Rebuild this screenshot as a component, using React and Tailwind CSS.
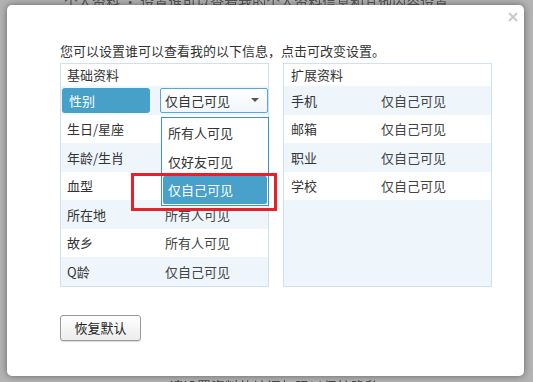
const basic = [
  { label: "生日/星座", value: "所有人可见" },
  { label: "年龄/生肖", value: "仅自己可见" },
  { label: "血型", value: "仅自己可见" },
  { label: "所在地", value: "所有人可见" },
  { label: "故乡", value: "所有人可见" },
  { label: "Q龄", value: "仅自己可见" },
];

const extra = [
  { label: "手机", value: "仅自己可见" },
  { label: "邮箱", value: "仅自己可见" },
  { label: "职业", value: "仅自己可见" },
  { label: "学校", value: "仅自己可见" },
];

const options = ["所有人可见", "仅好友可见", "仅自己可见"];

export default function App() {
  return (
    <div className="relative w-[533px] h-[382px] overflow-hidden bg-[#b3b3b3] pt-[5px] pl-[7px] font-['Noto_Sans_CJK_SC',sans-serif] text-[13px] text-[#333]">
      {/* page behind the overlay */}
      <div className="absolute left-[64px] top-[-9px] text-[14px] text-[#555] blur-[0.6px]">
        个人资料 · 设置谁可以查看我的个人资料信息和其他内容设置
      </div>
      <div className="absolute left-[145px] top-[376px] flex items-center gap-[14px] blur-[0.6px]">
        <div className="w-[10px] h-[10px] bg-[#5e9a3c]" />
        <div className="text-[14px] text-[#444]">请设置资料的访问权限以保护隐私</div>
      </div>

      <div className="relative w-[517px] h-[371px] bg-white rounded-[5px] shadow-[0_0_7px_rgba(0,0,0,0.45)] pt-[38px] pl-[53px]">
        <svg className="absolute left-[501px] top-[7px]" width="10" height="10" viewBox="0 0 10 10">
          <path d="M1 1L9 9M9 1L1 9" stroke="#c9c9c9" strokeWidth="2" />
        </svg>

        <div className="h-4 leading-4">您可以设置谁可以查看我的以下信息，点击可改变设置。</div>

        <div className="mt-1 flex gap-[14px]">
          {/* 基础资料 */}
          <div className="relative w-[209px] h-[224px] border border-[#cde2ef] flex flex-col">
            <div className="h-[22px] leading-[22px] pl-[6px]">基础资料</div>
            <div className="h-[28.6px] flex items-center bg-[#eef6fc]">
              <div className="ml-px w-[89px] h-[25px] rounded-[3px] bg-[#46a0c8] text-white pl-[7px] leading-[25px]">
                性别
              </div>
              <div className="ml-[10px] w-[108px] h-[25px] shrink-0 rounded-[2px] border border-[#5aa7d6] bg-gradient-to-b from-white to-[#f1f6fa] flex items-center justify-between pl-[4px] pr-[8px] text-[#333]">
                <span>仅自己可见</span>
                <svg width="8" height="4" viewBox="0 0 8 4">
                  <path d="M0 0H8L4 4Z" fill="#555" />
                </svg>
              </div>
            </div>
            {basic.map((row, i) => (
              <div
                key={row.label}
                className={`h-[28.6px] flex items-center ${i % 2 === 1 ? "bg-[#eef6fc]" : "bg-white"}`}
              >
                <div className="w-[104px] pl-[6px]">{row.label}</div>
                <div className="text-[#444]">{row.value}</div>
              </div>
            ))}

            {/* open list */}
            <div className="absolute left-[100px] top-[53px] w-[108px] h-[89px] bg-white border border-[#3f90c6] p-px flex flex-col">
              {options.map((o, i) =>
                i === 2 ? (
                  <div
                    key={o}
                    className="h-[28px] rounded-[2px] bg-[#47a1ca] text-white pl-[5px] leading-[28px]"
                  >
                    {o}
                  </div>
                ) : (
                  <div key={o} className="h-[28.5px] pl-[5px] leading-[28.5px]">
                    {o}
                  </div>
                )
              )}
            </div>
            <div className="absolute left-[70px] top-[109px] w-[146px] h-[38px] border-[3px] border-[#e8202a]" />
          </div>

          {/* 扩展资料 */}
          <div className="w-[209px] h-[224px] border border-[#cde2ef] flex flex-col bg-[#eef6fc]">
            <div className="h-[22px] leading-[22px] pl-[7px] bg-white">扩展资料</div>
            {extra.map((row, i) => (
              <div
                key={row.label}
                className={`h-[28.6px] flex items-center ${i % 2 === 0 ? "bg-[#eef6fc]" : "bg-white"}`}
              >
                <div className="w-[97px] pl-[7px]">{row.label}</div>
                <div className="text-[#444]">{row.value}</div>
              </div>
            ))}
          </div>
        </div>

        <button className="mt-[28px] w-[81px] h-[26px] rounded-[3px] border border-[#9a9a9a] bg-gradient-to-b from-white to-[#ececec] text-[#222] shadow-[0_1px_1px_rgba(0,0,0,0.15)]">
          恢复默认
        </button>
      </div>
    </div>
  );
}
